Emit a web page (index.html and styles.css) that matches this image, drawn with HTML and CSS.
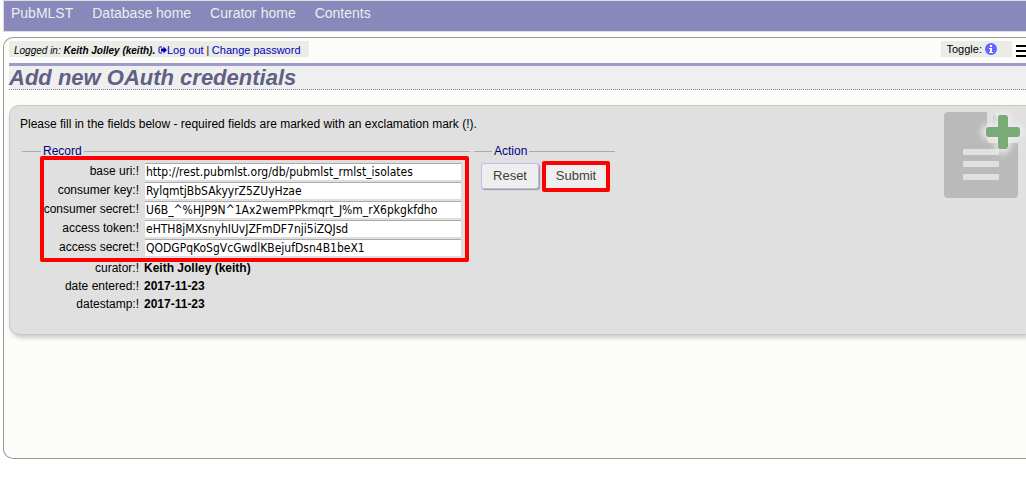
FILE: index.html
```html
<!DOCTYPE html>
<html lang="en">
<head>
<meta charset="utf-8">
<title>Add new OAuth credentials</title>
<link rel="stylesheet" href="styles.css">
</head>
<body>
<nav class="menu">
  <a href="#">PubMLST</a>
  <a href="#">Database home</a>
  <a href="#">Curator home</a>
  <a href="#">Contents</a>
</nav>
<main class="panel">
  <div class="topline">
    <div class="chip login"><i>Logged in: <b>Keith Jolley (keith).</b></i>
      <a href="#"><svg class="exit" viewBox="0 0 18 16" aria-hidden="true"><path d="M8 2H4Q2 2 2 4v8q0 2 2 2h4" fill="none" stroke="currentColor" stroke-width="2"/><path d="M6 5h5V1l7 7-7 7v-4H6z" fill="currentColor"/></svg>Log out</a> | <a href="#">Change password</a></div>
    <div class="tools">
      <div class="chip toggle">Toggle:
        <a href="#" aria-label="Information"><svg class="info" viewBox="0 0 12 12" aria-hidden="true"><circle cx="6" cy="6" r="6" fill="#66f"/><path d="M5 2h2v2H5zM4 5h3v4h1v1H4V9h1V6H4z" fill="#fff"/></svg></a></div>
      <button class="burger" type="button" aria-label="Menu"><svg viewBox="0 0 14 12" aria-hidden="true"><path d="M0 1h14M0 6h14M0 11h14" stroke="#000" stroke-width="2"/></svg></button>
    </div>
  </div>
  <h1>Add new OAuth credentials</h1>
  <section class="box">
    <svg class="watermark" viewBox="0 0 82 92" aria-hidden="true">
      <defs><filter id="glow" x="-50%" y="-50%" width="200%" height="200%" filterUnits="objectBoundingBox"><feGaussianBlur stdDeviation="3"/></filter></defs>
      <path d="M5 2H43V29Q43 33 47 33H74V84Q74 88 70 88H4Q0 88 0 84V6Q0 2 5 2z" fill="#bababa"/>
      <path d="M49 4L72 27H49z" fill="#c8c8c8"/>
      <path d="M20 39h34q1 0 1 1v4q0 1-1 1H20q-1 0-1-1v-4q0-1 1-1zM20 51h34q1 0 1 1v4q0 1-1 1H20q-1 0-1-1v-4q0-1 1-1zM20 64h34q1 0 1 1v4q0 1-1 1H20q-1 0-1-1v-4q0-1 1-1z" fill="#e0e0e0"/>
      <path d="M59 8V36M45 22H73" stroke="#ececec" stroke-width="15" stroke-linecap="round" filter="url(#glow)"/>
      <path d="M56 5h5q3 0 3 3v9h9q3 0 3 3v4q0 3-3 3h-9v9q0 3-3 3h-5q-2 0-2-3v-9h-9q-3 0-3-3v-4q0-3 3-3h9V8q0-3 2-3z" fill="#79ab79"/>
    </svg>
    <p class="intro">Please fill in the fields below - required fields are marked with an exclamation mark (!).</p>
    <form class="form">
      <fieldset class="record">
        <legend>Record</legend>
        <div class="row"><label for="uri">base uri:!</label><input id="uri" type="text" value="http://rest.pubmlst.org/db/pubmlst_rmlst_isolates"></div>
        <div class="row"><label for="ckey">consumer key:!</label><input id="ckey" type="text" value="RylqmtjBbSAkyyrZ5ZUyHzae"></div>
        <div class="row"><label for="csecret">consumer secret:!</label><input id="csecret" type="text" value="U6B_^%HJP9N^1Ax2wemPPkmqrt_J%m_rX6pkgkfdho"></div>
        <div class="row"><label for="token">access token:!</label><input id="token" type="text" value="eHTH8jMXsnyhIUvJZFmDF7nji5iZQJsd"></div>
        <div class="row"><label for="asecret">access secret:!</label><input id="asecret" type="text" value="QODGPqKoSgVcGwdlKBejufDsn4B1beX1"></div>
        <div class="row fixed"><span class="name">curator:!</span><b>Keith Jolley (keith)</b></div>
        <div class="row fixed"><span class="name">date entered:!</span><b>2017-11-23</b></div>
        <div class="row fixed"><span class="name">datestamp:!</span><b>2017-11-23</b></div>
        <span class="mark mark-fields"></span>
      </fieldset>
      <fieldset class="action">
        <legend>Action</legend>
        <div class="buttons">
          <button class="btn" type="reset">Reset</button>
          <button class="btn submit" type="submit">Submit<span class="mark mark-submit"></span></button>
        </div>
      </fieldset>
    </form>
  </section>
</main>
</body>
</html>
```
FILE: styles.css
```css
* { box-sizing: border-box; }
body {
  margin: 0;
  background: #fff;
  color: #000;
  font: 12px/18px "Liberation Sans", Arial, sans-serif;
  overflow-x: hidden;
}
a { color: #00b; text-decoration: none; }

.menu {
  display: flex;
  gap: 19px;
  height: 32px;
  margin-left: 3px;
  padding: 3px 7px;
  background: #8888bb;
  border: 1px solid #ddd;
  border-right: 0;
  font-size: 14px;
}
.menu a { color: #eee; }

.panel {
  min-height: 422px;
  margin: 5px 0 0 3px;
  padding: 3px 0 0 5px;
  background: #fcfdf8;
  border: 1px solid #999;
  border-right: 0;
  border-radius: 10px 0 0 10px;
}
.topline {
  display: flex;
  justify-content: space-between;
  margin-bottom: 6px;
}
.chip {
  height: 16px;
  padding: 0 5px;
  background: #ebebe7;
  font-size: 10px;
  line-height: 18px;
  white-space: nowrap;
}
.login { padding-right: 8px; }
.login a { font-size: 11px; }
.exit { width: 9px; height: 8px; }
.tools { display: flex; gap: 4px; overflow: hidden; }
.toggle { padding-right: 15px; font-size: 11px; line-height: 17px; }
.info { width: 12px; height: 12px; vertical-align: -2px; }
.burger {
  width: 10px;
  height: 16px;
  padding: 4px 0 0;
  border: 0;
  background: none;
  overflow: hidden;
}
.burger svg { display: block; width: 14px; height: 12px; }

h1 {
  margin: 0 0 15px;
  background: #efefef;
  border-top: 3px solid #9c9ccc;
  border-bottom: 1px dotted #8080a8;
  color: #606085;
  font-size: 22px;
  font-style: italic;
  line-height: 23px;
}

.box {
  position: relative;
  min-height: 230px;
  padding: 9px 10px 20px;
  background: #e0e0e0;
  border: 1px solid #c8c8c8;
  border-right: 0;
  border-radius: 10px 0 0 10px;
  box-shadow: 2px 3px 4px #ccc;
}
.watermark {
  position: absolute;
  top: 4px;
  right: 0;
  width: 82px;
  height: 92px;
}
.intro { margin: 0 0 9px; }

.form { display: flex; align-items: flex-start; gap: 4px; }
fieldset {
  position: relative;
  min-width: 0;
  margin: 0 0 0 2px;
  padding: 3px 8px 0;
  border: 0 solid #aaa;
  border-top-width: 1px;
}
legend { margin-left: 11px; padding: 0 2px; color: #000080; }
.record { width: 448px; }
.action { width: 141px; margin: 0; padding: 3px 7px 0; }

.row {
  display: grid;
  grid-template-columns: 109px 318px;
  column-gap: 5px;
  height: 19px;
  line-height: 16px;
}
.row label, .row .name { text-align: right; white-space: nowrap; }
.row.fixed { height: 18px; line-height: 20px; }
.row input {
  width: 100%;
  height: 18px;
  padding: 0 1px;
  background: #fff;
  border: 1px solid #ddd;
  border-top-color: #aaa;
  border-radius: 2px;
  color: #000;
  font: 12px "DejaVu Sans Condensed", Tahoma, sans-serif;
}

.buttons { display: flex; gap: 5px; }
.btn {
  position: relative;
  width: 58px;
  height: 26px;
  padding: 0 0 2px;
  background: #eee;
  border: 1px solid #bbe;
  border-radius: 3px;
  box-shadow: 1px 1px 1px #999;
  color: #404040;
  font: 13px "Liberation Sans", Arial, sans-serif;
}
.submit { width: 64px; border-color: #9d9; }

.mark {
  position: absolute;
  border: 4px solid #f00;
  border-radius: 2px;
  pointer-events: none;
}
.mark-fields { top: -4px; left: 18px; right: 1px; height: 106px; }
.mark-submit { inset: -3px -3px -4px; }
```
